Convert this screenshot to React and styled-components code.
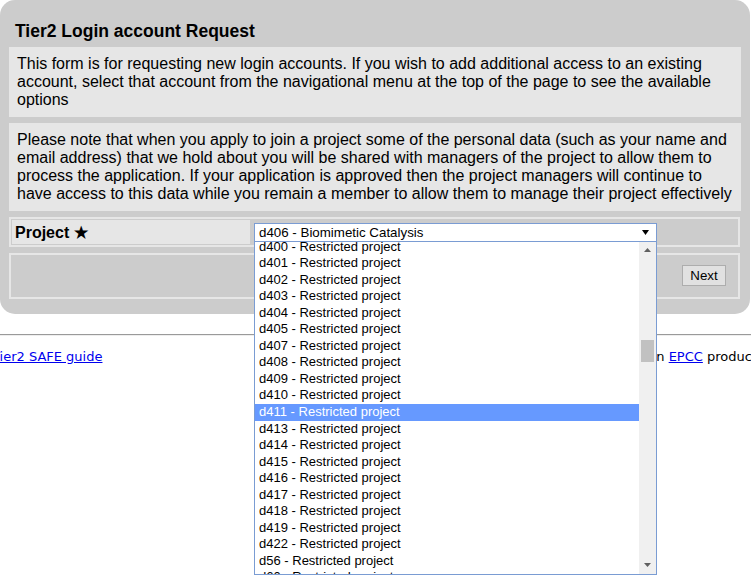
import React from "react";
import styled, { createGlobalStyle } from "styled-components";

const projects = [
  "d400", "d401", "d402", "d403", "d404", "d405", "d407", "d408", "d409", "d410",
  "d411", "d413", "d414", "d415", "d416", "d417", "d418", "d419", "d422", "d56", "d60",
];

const App = () => {
  return (
    <Page>
      <GlobalStyle />
      <Panel>
        <Title>Tier2 Login account Request</Title>
        <InfoBox>
          This form is for requesting new login accounts. If you wish to add additional access to an
          existing account, select that account from the navigational menu at the top of the page to
          see the available options
        </InfoBox>
        <InfoBox>
          Please note that when you apply to join a project some of the personal data (such as your
          name and email address) that we hold about you will be shared with managers of the project
          to allow them to process the application. If your application is approved then the project
          managers will continue to have access to this data while you remain a member to allow them
          to manage their project effectively
        </InfoBox>
        <FieldRow>
          <FieldLabel>Project ★</FieldLabel>
          <FieldValue>
            <SelectWrap>
              <SelectBox>
                <span>d406 - Biomimetic Catalysis</span>
                <svg width="7" height="5" viewBox="0 0 7 5">
                  <path d="M0 0h7L3.5 5z" fill="#000" />
                </svg>
              </SelectBox>
              <Dropdown>
                <OptionList>
                  <Options>
                    {projects.map((p) => (
                      <Option key={p} $active={p === "d411"}>
                        {p} - Restricted project
                      </Option>
                    ))}
                  </Options>
                </OptionList>
                <Scrollbar>
                  <ScrollArrow>
                    <svg width="7" height="4" viewBox="0 0 7 4">
                      <path d="M0 4h7L3.5 0z" fill="#606060" />
                    </svg>
                  </ScrollArrow>
                  <Track>
                    <Thumb />
                  </Track>
                  <ScrollArrow>
                    <svg width="7" height="4" viewBox="0 0 7 4">
                      <path d="M0 0h7L3.5 4z" fill="#606060" />
                    </svg>
                  </ScrollArrow>
                </Scrollbar>
              </Dropdown>
            </SelectWrap>
          </FieldValue>
        </FieldRow>
        <ActionRow>
          <Button>Next</Button>
        </ActionRow>
      </Panel>
      <Rule />
      <Footer>
        <FooterLink href="#">Tier2 SAFE guide</FooterLink>
        <span>
          SAFE is an <FooterLink href="#">EPCC</FooterLink> product
        </span>
      </Footer>
    </Page>
  );
};

export default App;

const GlobalStyle = createGlobalStyle`
  html {
    overflow: hidden;
    background: #fff;
  }
  body {
    margin: 0;
    padding: 0;
    font-family: "Liberation Sans", Arial, sans-serif;
    color: #000;
  }
`;

const Page = styled.div`
  width: 751px;
  height: 575px;
`;

const Panel = styled.div`
  width: 750px;
  box-sizing: border-box;
  background-color: #cccccc;
  border-radius: 15px;
  padding: 21px 9px 15px 9px;
  display: flex;
  flex-direction: column;
  gap: 6px;
`;

const Title = styled.h2`
  margin: 0;
  padding-left: 6px;
  font-size: 17.5px;
  line-height: 20px;
  font-weight: bold;
`;

const InfoBox = styled.div`
  background-color: #e6e6e6;
  padding: 8px;
  font-size: 16px;
  line-height: 18px;
`;

const FieldRow = styled.div`
  display: flex;
  align-items: center;
  gap: 2px;
  border: 2px solid #e6e6e6;
  padding: 1px;
  margin-right: 1px;
`;

const FieldLabel = styled.div`
  width: 238px;
  height: 24px;
  box-sizing: border-box;
  padding-left: 3px;
  display: flex;
  align-items: center;
  background-color: #e6e6e6;
  font-size: 16px;
  font-weight: bold;
`;

const FieldValue = styled.div`
  flex: 1;
  display: flex;
  align-items: center;
  padding-left: 2px;
`;

const SelectWrap = styled.div`
  position: relative;
  width: 403px;
`;

const SelectBox = styled.div`
  height: 19px;
  box-sizing: border-box;
  border: 1px solid #7a9cd3;
  background: #fff;
  display: flex;
  align-items: center;
  justify-content: space-between;
  padding: 0 7px 0 4px;
  font-size: 13.33px;
`;

const Dropdown = styled.div`
  position: absolute;
  top: 100%;
  left: 0;
  right: 0;
  height: 333px;
  box-sizing: border-box;
  display: flex;
  background: #fff;
  border: 1px solid #7a9cd3;
  border-top: none;
  z-index: 10;
`;

const OptionList = styled.div`
  flex: 1;
  overflow: hidden;
`;

const Options = styled.div`
  margin-top: -3px;
`;

const Option = styled.div`
  height: 16.55px;
  line-height: 16.55px;
  padding-left: 4px;
  font-size: 13px;
  white-space: nowrap;
  background-color: ${(p) => (p.$active ? "#6699ff" : "transparent")};
  color: ${(p) => (p.$active ? "#fff" : "#000")};
`;

const Scrollbar = styled.div`
  width: 17px;
  background-color: #f0f0f0;
  display: flex;
  flex-direction: column;
`;

const ScrollArrow = styled.div`
  height: 17px;
  display: flex;
  align-items: center;
  justify-content: center;
`;

const Track = styled.div`
  flex: 1;
`;

const Thumb = styled.div`
  margin: 81px 2px 0 2px;
  height: 22px;
  background-color: #c1c1c1;
`;

const ActionRow = styled.div`
  height: 46px;
  box-sizing: border-box;
  border: 2px solid #e6e6e6;
  margin-right: 1px;
  display: flex;
  align-items: center;
  justify-content: flex-end;
  padding: 0 12px 2px 0;
`;

const Button = styled.button`
  width: 44px;
  height: 21px;
  padding: 0;
  font-family: "Liberation Sans", Arial, sans-serif;
  font-size: 13.33px;
  color: #000;
  background-color: #e1e1e1;
  border: 1px solid #adadad;
`;

const Rule = styled.div`
  margin-top: 20px;
  border-top: 1px solid #9a9a9a;
  border-bottom: 1px solid #eeeeee;
`;

const Footer = styled.div`
  display: flex;
  justify-content: space-between;
  margin: 13px -6px 0 -8px;
  font-family: "DejaVu Sans", Verdana, sans-serif;
  font-size: 13px;
  line-height: 15px;
  white-space: nowrap;
`;

const FooterLink = styled.a`
  color: #0000ee;
  text-decoration: underline;
`;
